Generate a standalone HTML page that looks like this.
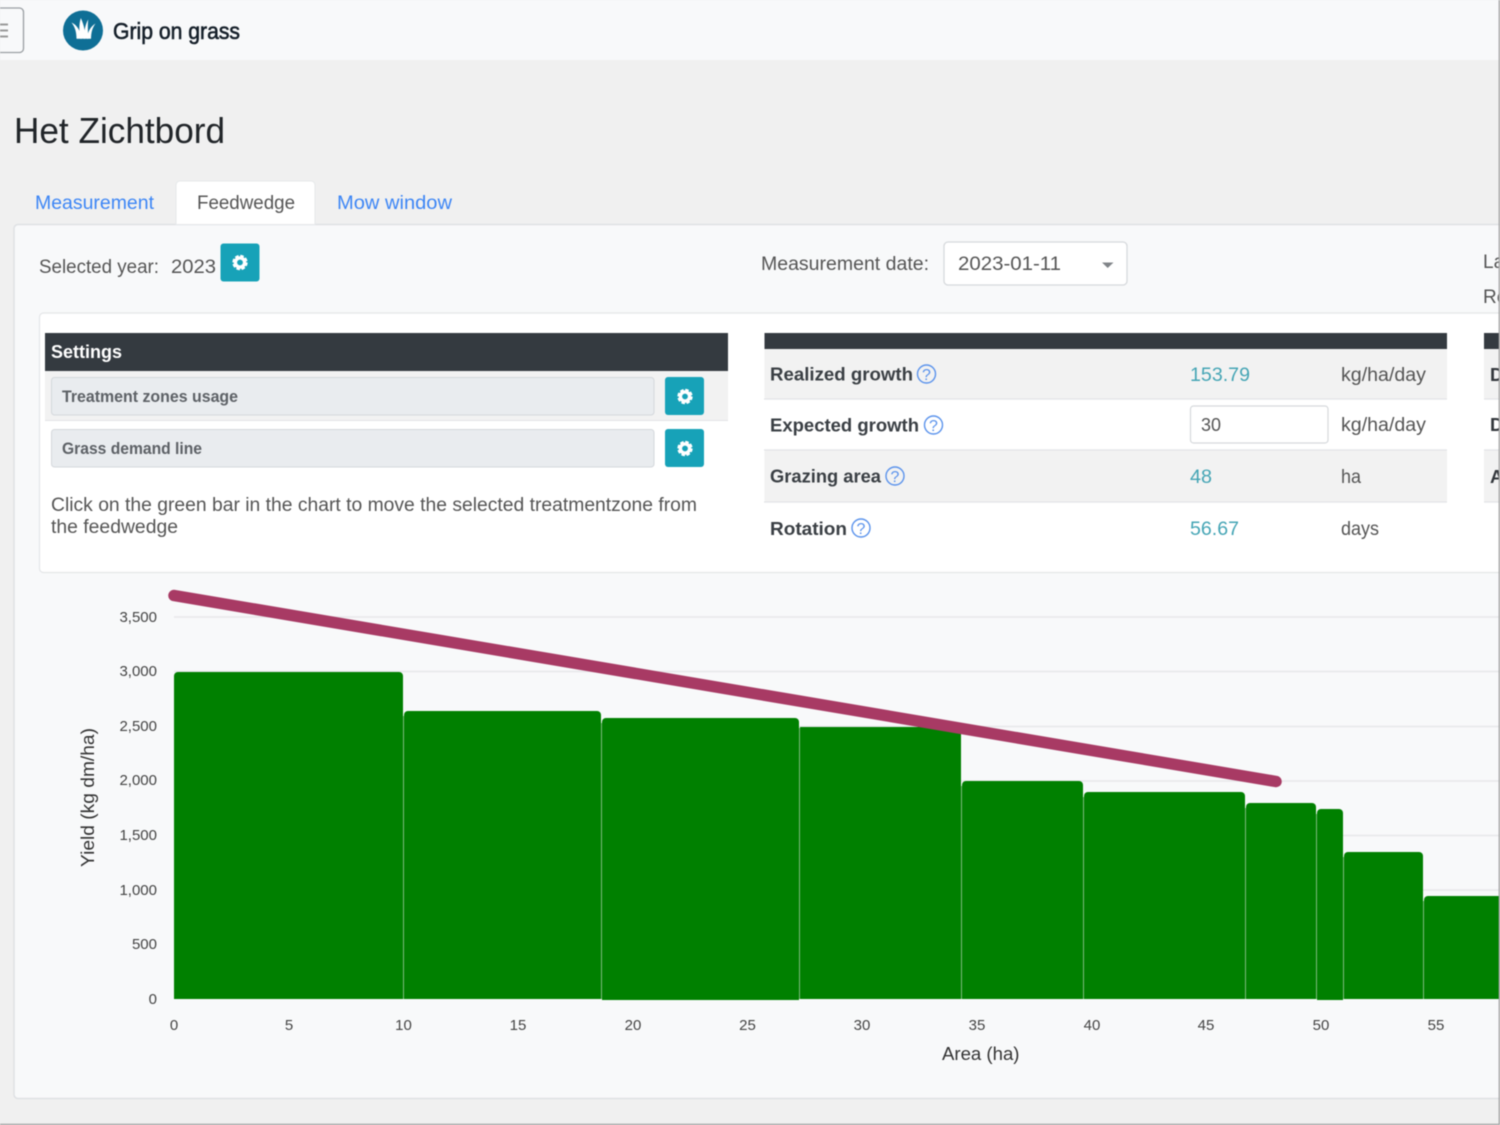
<!DOCTYPE html>
<html><head><meta charset="utf-8"><title>Het Zichtbord</title>
<style>
html,body{margin:0;padding:0;width:1500px;height:1125px;overflow:hidden;background:#f0f0f0}
svg{display:block;filter:blur(.45px)}
text{font-family:"Liberation Sans",sans-serif;font-size:19px;fill:#555}
.tb{font-weight:bold;fill:#3a3f44;font-size:18.5px}
.v{fill:#45a5b5}
.l{fill:#3d86f5}
.t{font-size:15px;fill:#444}
.q{font-size:16px;fill:#5b93ec}
</style></head><body>
<svg width="1500" height="1125" viewBox="0 0 1500 1125" xmlns="http://www.w3.org/2000/svg">
<defs>
<g id="gear">
<circle r="6" fill="none" stroke="#fff" stroke-width="3.4" stroke-dasharray="3.2 1.52"/>
<circle r="4.6" fill="none" stroke="#fff" stroke-width="3.4"/>
<circle r="2.3" fill="#17a2b8"/>
</g>
</defs>
<rect width="1500" height="1125" fill="#f0f0f0"/>
<rect width="1500" height="60" fill="#f8f9fa"/>
<rect x="-10" y="8" width="33.500" height="44.500" rx="4" fill="#f8f9fa" stroke="#9a9fa3" stroke-width="1.300"/>
<path d="M0 24.500H8M0 30.500H8M0 36.500H8" stroke="#9a9a9a" stroke-width="2"/>
<circle cx="83" cy="30.500" r="20" fill="#0f6f96"/>
<g fill="#fff">
<path d="M71.500 22.500C77 25 80.500 30.500 81.500 38.800H76.500C76.500 32 75 27 71.500 22.500Z"/>
<path d="M80.800 18C78.800 25 79 32 80.500 38.800H85C85.500 32 84 25 80.800 18Z"/>
<path d="M88.200 19.500C85 25 84 32 84 38.800H88.200C88 31 87.500 25 88.200 19.500Z"/>
<path d="M95.500 23.500C90.500 26.500 87.500 32 87 38.800H91C91.200 32 92.300 28 95.500 23.500Z"/>
</g>
<text x="113" y="39" textLength="127" lengthAdjust="spacingAndGlyphs" style="font-size:23px;fill:#16202a;stroke:#16202a;stroke-width:.6">Grip on grass</text>
<text x="14" y="143" textLength="211" lengthAdjust="spacingAndGlyphs" style="font-size:36px;fill:#212529">Het Zichtbord</text>

<rect x="14" y="224.500" width="1500" height="874" rx="4" fill="#f8f9fa" stroke="#dfe1e4" stroke-width="1.500"/>
<path d="M176 224.500V185a4 4 0 0 1 4-4H311a4 4 0 0 1 4 4V224.500Z" fill="#fff" stroke="#e6e8ea"/>
<text class="l" x="35" y="209" textLength="119" lengthAdjust="spacingAndGlyphs">Measurement</text>
<text x="197" y="209" textLength="98" lengthAdjust="spacingAndGlyphs">Feedwedge</text>
<text class="l" x="337" y="209" textLength="115" lengthAdjust="spacingAndGlyphs">Mow window</text>

<text x="39" y="273" textLength="120" lengthAdjust="spacingAndGlyphs">Selected year:</text>
<text x="171" y="273" textLength="45" lengthAdjust="spacingAndGlyphs">2023</text>
<rect x="220.500" y="243.500" width="39" height="38" rx="3" fill="#17a2b8"/>
<use href="#gear" x="240" y="262.500"/>

<text x="761" y="270" textLength="168" lengthAdjust="spacingAndGlyphs">Measurement date:</text>
<rect x="944" y="242" width="183" height="43" rx="4" fill="#fff" stroke="#d6d9dc" stroke-width="1.300"/>
<text x="958" y="270" textLength="103" lengthAdjust="spacingAndGlyphs">2023-01-11</text>
<path d="M1102 262.500H1113.500L1107.700 268Z" fill="#808488"/>
<text x="1483" y="268">La</text>
<text x="1483" y="303">Re</text>

<rect x="39.500" y="313" width="1480" height="259.500" rx="4" fill="#fff" stroke="#e4e6e8" stroke-width="1.200"/>

<rect x="45" y="333" width="683" height="38" fill="#343a40"/>
<text x="51" y="358" textLength="71" lengthAdjust="spacingAndGlyphs" style="font-weight:bold;fill:#fff;font-size:18.500px">Settings</text>
<rect x="45" y="371" width="683" height="50" fill="#f2f2f2"/>
<path d="M45 420.500H728" stroke="#e2e4e6"/>
<rect x="51.500" y="377.500" width="602.500" height="37.500" rx="3" fill="#e9ecef" stroke="#d4d8dc"/>
<text x="62" y="402" textLength="176" lengthAdjust="spacingAndGlyphs" style="font-size:17px;font-weight:bold;fill:#5d6166">Treatment zones usage</text>
<rect x="665" y="377" width="39" height="38" rx="3" fill="#17a2b8"/>
<use href="#gear" x="685" y="396.500"/>
<rect x="51.500" y="429.500" width="602.500" height="37.500" rx="3" fill="#e9ecef" stroke="#d4d8dc"/>
<text x="62" y="454" textLength="140" lengthAdjust="spacingAndGlyphs" style="font-size:17px;font-weight:bold;fill:#5d6166">Grass demand line</text>
<rect x="665" y="429" width="39" height="38" rx="3" fill="#17a2b8"/>
<use href="#gear" x="685" y="448.500"/>
<text x="51" y="511" textLength="646" lengthAdjust="spacingAndGlyphs">Click on the green bar in the chart to move the selected treatmentzone from</text>
<text x="51" y="533" textLength="127" lengthAdjust="spacingAndGlyphs">the feedwedge</text>

<rect x="764.500" y="333" width="682.500" height="16" fill="#343a40"/>
<rect x="764.500" y="349" width="682.500" height="50" fill="#f2f2f2"/>
<rect x="764.500" y="450" width="682.500" height="52" fill="#f2f2f2"/>
<path d="M764 399H1447M764 450H1447M764 502H1447" stroke="#e2e4e6" stroke-width="1.200"/>

<rect x="1484" y="333" width="20" height="16" fill="#343a40"/>
<rect x="1484" y="349" width="20" height="50" fill="#f2f2f2"/>
<rect x="1484" y="450" width="20" height="52" fill="#f2f2f2"/>
<path d="M1484 399H1500M1484 450H1500M1484 502H1500" stroke="#e2e4e6" stroke-width="1.200"/>
<text class="tb" x="1490" y="381" style="fill:#33373c">D</text>
<text class="tb" x="1490" y="431" style="fill:#33373c">D</text>
<text class="tb" x="1490" y="483" style="fill:#33373c">A</text>

<text class="tb" x="770" y="380.500" textLength="143" lengthAdjust="spacingAndGlyphs">Realized growth</text>
<text class="tb" x="770" y="431.500" textLength="149" lengthAdjust="spacingAndGlyphs">Expected growth</text>
<text class="tb" x="770" y="482.500" textLength="111" lengthAdjust="spacingAndGlyphs">Grazing area</text>
<text class="tb" x="770" y="535" textLength="77" lengthAdjust="spacingAndGlyphs">Rotation</text>
<g fill="none" stroke="#5b93ec" stroke-width="1.400">
<circle cx="926.500" cy="374" r="9"/><circle cx="933.500" cy="425" r="9"/><circle cx="895" cy="476" r="9"/><circle cx="861" cy="528" r="9"/>
</g>
<g text-anchor="middle">
<text class="q" x="926.500" y="380">?</text>
<text class="q" x="933.500" y="431">?</text>
<text class="q" x="895" y="482">?</text>
<text class="q" x="861" y="534">?</text>
</g>
<text class="v" x="1190" y="381" textLength="60" lengthAdjust="spacingAndGlyphs">153.79</text>
<rect x="1190.500" y="406" width="137.500" height="37" rx="3" fill="#fff" stroke="#d6d9dc" stroke-width="1.200"/>
<text x="1201" y="431" textLength="20" lengthAdjust="spacingAndGlyphs" style="font-size:18px">30</text>
<text class="v" x="1190" y="483" textLength="22" lengthAdjust="spacingAndGlyphs">48</text>
<text class="v" x="1190" y="535" textLength="49" lengthAdjust="spacingAndGlyphs">56.67</text>
<text x="1341" y="381" textLength="85" lengthAdjust="spacingAndGlyphs">kg/ha/day</text>
<text x="1341" y="431" textLength="85" lengthAdjust="spacingAndGlyphs">kg/ha/day</text>
<text x="1341" y="483" textLength="20" lengthAdjust="spacingAndGlyphs">ha</text>
<text x="1341" y="535" textLength="38" lengthAdjust="spacingAndGlyphs">days</text>

<path d="M174 617H1500M174 671.500H1500M174 726.500H1500M174 781H1500M174 835.500H1500M174 890H1500M174 944.500H1500" stroke="#e7e8ea" stroke-width="1.500"/>
<g fill="#008000">
<path d="M174 999V676a4 4 0 0 1 4-4H399a4 4 0 0 1 4 4V999Z"/>
<path d="M404 999V715a4 4 0 0 1 4-4H597a4 4 0 0 1 4 4V999Z"/>
<path d="M602 1000V722a4 4 0 0 1 4-4H795a4 4 0 0 1 4 4V1000Z"/>
<path d="M800 999V727H961V999Z"/>
<path d="M962 999V785a4 4 0 0 1 4-4H1079a4 4 0 0 1 4 4V999Z"/>
<path d="M1084 999V796a4 4 0 0 1 4-4H1241a4 4 0 0 1 4 4V999Z"/>
<path d="M1246 999V807a4 4 0 0 1 4-4H1312a4 4 0 0 1 4 4V999Z"/>
<path d="M1317 1000V813a4 4 0 0 1 4-4H1339a4 4 0 0 1 4 4V1000Z"/>
<path d="M1344 999V856a4 4 0 0 1 4-4H1419a4 4 0 0 1 4 4V999Z"/>
<path d="M1424 999V900a4 4 0 0 1 4-4H1500V999Z"/>
</g>
<path d="M403.500 716V999M601.500 723V999M799.500 728V999M961.500 786V999M1083.500 797V999M1245.500 808V999M1316.500 814V999M1343.500 857V999M1423.500 901V999" stroke="#7dbb7d" stroke-width="1"/>
<path d="M174 595.500L1276 781.500" stroke="#a83a64" stroke-width="11.500" stroke-linecap="round"/>

<g text-anchor="end">
<text class="t" x="157" y="622">3,500</text>
<text class="t" x="157" y="676">3,000</text>
<text class="t" x="157" y="731">2,500</text>
<text class="t" x="157" y="785">2,000</text>
<text class="t" x="157" y="840">1,500</text>
<text class="t" x="157" y="895">1,000</text>
<text class="t" x="157" y="949">500</text>
<text class="t" x="157" y="1004">0</text>
</g>
<g text-anchor="middle">
<text class="t" x="174" y="1030">0</text>
<text class="t" x="289" y="1030">5</text>
<text class="t" x="403.500" y="1030">10</text>
<text class="t" x="518" y="1030">15</text>
<text class="t" x="633" y="1030">20</text>
<text class="t" x="747.500" y="1030">25</text>
<text class="t" x="862" y="1030">30</text>
<text class="t" x="977" y="1030">35</text>
<text class="t" x="1092" y="1030">40</text>
<text class="t" x="1206" y="1030">45</text>
<text class="t" x="1321" y="1030">50</text>
<text class="t" x="1436" y="1030">55</text>
</g>
<text x="942" y="1060" textLength="77.500" lengthAdjust="spacingAndGlyphs" style="font-size:18px;fill:#333">Area (ha)</text>
<text transform="translate(94 867) rotate(-90)" textLength="139" lengthAdjust="spacingAndGlyphs" style="font-size:18px;fill:#333">Yield (kg dm/ha)</text>

<path d="M1499.300 0V1125M0 1124.400H1500" stroke="#a0a0a0" stroke-width="1.300"/>
</svg>
</body></html>
